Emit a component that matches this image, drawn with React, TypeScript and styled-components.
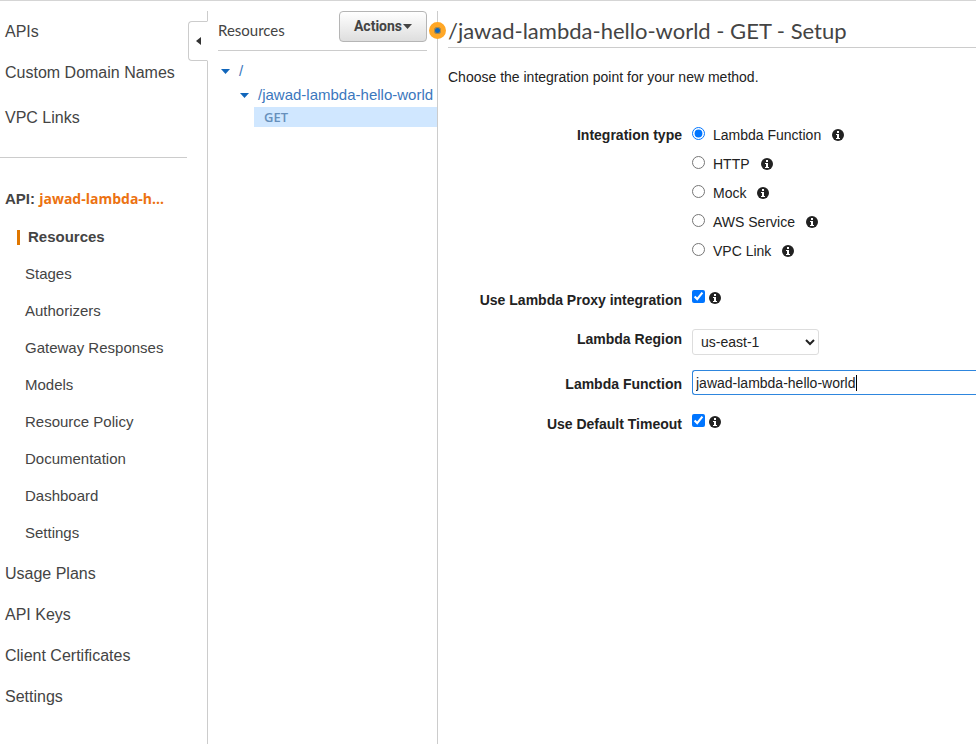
import React, { useState } from "react";
import styled, { createGlobalStyle, css } from "styled-components";

const GlobalStyle = createGlobalStyle`
  *, *::before, *::after { box-sizing: border-box; }
  body { margin: 0; background: #fff; color: #222; font: 14px/20px "Liberation Sans", Arial, sans-serif; }
  ul { list-style: none; margin: 0; padding: 0; }
  a { color: inherit; text-decoration: none; }
`;

const Page = styled.div`
  display: flex;
  min-height: 100vh;
  border-top: 1px solid #d5d5d5;
  padding-top: 10px;
`;

const Sidebar = styled.nav`
  position: relative;
  flex: none;
  width: 208px;
  border-right: 1px solid #ccc;
  color: #444;
`;

const MainLinks = styled.ul<{ $top?: boolean }>`
  display: grid;
  gap: 21px;
  padding: 21px 0 0 5px;
  font-size: 16px;
  ${(p) =>
    p.$top &&
    css`
      margin-right: 20px;
      padding-top: 11px;
      padding-bottom: 29px;
      border-bottom: 1px solid #ccc;
      li:last-child { padding-top: 4px; }
    `}
`;

const ApiName = styled.h2`
  margin: 31px 0 18px 5px;
  font-size: 15px;
  line-height: 20px;
  a {
    color: #ec7211;
    font-family: "Open Sans", sans-serif;
    font-size: 14px;
  }
`;

const SubLinks = styled.ul`
  display: grid;
  gap: 17px;
  font-size: 15px;
`;

const SubLink = styled.li<{ $active?: boolean }>`
  padding-left: 25px;
  ${(p) =>
    p.$active &&
    css`
      display: flex;
      align-items: center;
      gap: 8px;
      padding-left: 17px;
      font-weight: bold;
      &::before {
        content: "";
        width: 3px;
        height: 15px;
        background: #e07700;
      }
    `}
`;

const CollapseButton = styled.button`
  position: absolute;
  top: 10px;
  right: -1px;
  width: 20px;
  height: 40px;
  display: flex;
  align-items: center;
  justify-content: center;
  padding: 0;
  border: 1px solid #ccc;
  border-right-color: #fff;
  border-radius: 4px 0 0 4px;
  background: #fff;
`;

const TreePanel = styled.section`
  position: relative;
  flex: none;
  width: 230px;
  padding-left: 10px;
  border-right: 1px solid #ccc;
  color: #444;
`;

const TreeHeader = styled.header`
  display: flex;
  justify-content: space-between;
  align-items: flex-start;
  height: 40px;
  margin-right: 10px;
  border-bottom: 1px solid #ccc;
  h2 {
    margin: 9px 0 0;
    font: 15px/20px Lato, sans-serif;
  }
`;

const ActionsButton = styled.button`
  display: flex;
  align-items: center;
  justify-content: center;
  gap: 1px;
  width: 88px;
  height: 31px;
  padding: 0 0 1px;
  border: 1px solid #b5b5b5;
  border-radius: 4px;
  background: linear-gradient(#fff, #dedede);
  color: #444;
  font: bold 14px Roboto, sans-serif;
`;

const Tree = styled.ul`
  padding-top: 8px;
  color: #3b77bd;
  font-size: 15px;
  line-height: 24px;
`;

const TreeRow = styled.li<{ $depth: number }>`
  display: flex;
  align-items: center;
  gap: 9px;
  padding-left: ${(p) => 3 + p.$depth * 19}px;
  white-space: nowrap;
`;

const MethodRow = styled.li`
  margin-left: 36px;
  padding-left: 10px;
  background: #d0e7ff;
  color: #668fbb;
  font: 600 13px/20px "Open Sans", sans-serif;
`;

const ResizeHandle = styled.span`
  position: absolute;
  top: 11px;
  right: -9px;
  width: 17px;
  height: 17px;
  border: 5px solid #ffa726;
  border-radius: 50%;
  background: #1166bb;
  box-shadow: inset 0 0 0 1px #b98a3a;
`;

const Main = styled.main`
  flex: 1;
  min-width: 0;
  padding-left: 10px;
`;

const Title = styled.h1`
  margin: 0;
  padding: 6px 0 2px;
  border-bottom: 1px solid #ccc;
  color: #444;
  font: 22px/28px Lato, sans-serif;
`;

const Intro = styled.p`
  margin: 19px 0 38px;
`;

const Form = styled.form`
  display: grid;
  grid-template-columns: 234px 1fr;
  gap: 15px 10px;
`;

const FieldLabel = styled.label<{ $boxed?: boolean }>`
  text-align: right;
  font-weight: bold;
  ${(p) => p.$boxed && css`padding: 4px 0 5px;`}
`;

const RadioList = styled.div`
  display: grid;
  gap: 9px;
  margin-bottom: 14px;
`;

const Option = styled.div`
  display: flex;
  align-items: center;
  height: 20px;
  label { margin: 0 11px 0 8px; }
`;

const Choice = styled.input`
  width: 13px;
  height: 13px;
  margin: 0 0 3px;
  accent-color: #0075ff;
`;

const CheckLine = styled.div`
  display: flex;
  align-items: center;
  align-self: start;
  gap: 4px;
  height: 16px;
  margin-bottom: 8px;
`;

const RegionSelect = styled.select`
  width: 127px;
  height: 26px;
  padding: 0 4px;
  border: 1px solid #ddd;
  border-radius: 3px;
  background: #fff;
  color: #222;
  font: inherit;
`;

const InputWrap = styled.div`
  position: relative;
  height: 25px;
`;

const FunctionInput = styled.input`
  display: block;
  width: 100%;
  height: 25px;
  padding: 0 3px;
  border: 1px solid #2e86de;
  border-right: 0;
  border-radius: 3px 0 0 3px;
  outline: none;
  color: #222;
  font: inherit;
`;

const TextCursor = styled.span`
  position: absolute;
  top: 5px;
  left: 164px;
  width: 1px;
  height: 16px;
  background: #000;
`;

const Caret = ({ color = "#1166bb" }) => (
  <svg width="9" height="5" viewBox="0 0 9 5" aria-hidden="true">
    <path d="M0 0h9L4.500 5z" fill={color} />
  </svg>
);

const Info = () => (
  <svg width="12" height="12" viewBox="0 0 12 12" role="img" aria-label="Info">
    <circle cx="6" cy="6" r="6" fill="#222" />
    <path d="M5 2h2v2H5zM4 5h3v4h1v1H4V9h1V6H4z" fill="#fff" />
  </svg>
);

const types = ["Lambda Function", "HTTP", "Mock", "AWS Service", "VPC Link"];
const subLinks = ["Resources", "Stages", "Authorizers", "Gateway Responses", "Models", "Resource Policy", "Documentation", "Dashboard", "Settings"];

export default function App() {
  const [type, setType] = useState(types[0]);
  const [fn, setFn] = useState("jawad-lambda-hello-world");
  const [touched, setTouched] = useState(false);
  return (
    <>
      <GlobalStyle />
      <Page>
        <Sidebar>
          <MainLinks $top>
            {["APIs", "Custom Domain Names", "VPC Links"].map((t) => (
              <li key={t}><a href="#">{t}</a></li>
            ))}
          </MainLinks>
          <ApiName>API: <a href="#">jawad-lambda-h...</a></ApiName>
          <SubLinks>
            {subLinks.map((t, i) => (
              <SubLink key={t} $active={i === 0}><a href="#">{t}</a></SubLink>
            ))}
          </SubLinks>
          <MainLinks>
            {["Usage Plans", "API Keys", "Client Certificates", "Settings"].map((t) => (
              <li key={t}><a href="#">{t}</a></li>
            ))}
          </MainLinks>
          <CollapseButton aria-label="Collapse navigation">
            <svg width="5" height="8" viewBox="0 0 5 8" aria-hidden="true"><path d="M5 0v8L0 4z" fill="#333" /></svg>
          </CollapseButton>
        </Sidebar>
        <TreePanel>
          <TreeHeader>
            <h2>Resources</h2>
            <ActionsButton>Actions<Caret color="#444" /></ActionsButton>
          </TreeHeader>
          <Tree>
            <TreeRow $depth={0}><Caret /><a href="#">/</a></TreeRow>
            <TreeRow $depth={1}><Caret /><a href="#">/jawad-lambda-hello-world</a></TreeRow>
            <MethodRow><a href="#">GET</a></MethodRow>
          </Tree>
          <ResizeHandle />
        </TreePanel>
        <Main>
          <Title>/jawad-lambda-hello-world - GET - Setup</Title>
          <Intro>Choose the integration point for your new method.</Intro>
          <Form>
            <FieldLabel as="span" id="type-label">Integration type</FieldLabel>
            <RadioList role="radiogroup" aria-labelledby="type-label">
              {types.map((t) => (
                <Option key={t}>
                  <Choice type="radio" name="type" id={t} checked={type === t} onChange={() => setType(t)} />
                  <label htmlFor={t}>{t}</label>
                  <Info />
                </Option>
              ))}
            </RadioList>
            <FieldLabel htmlFor="proxy">Use Lambda Proxy integration</FieldLabel>
            <CheckLine><Choice id="proxy" type="checkbox" defaultChecked /><Info /></CheckLine>
            <FieldLabel htmlFor="region">Lambda Region</FieldLabel>
            <RegionSelect id="region"><option>us-east-1</option></RegionSelect>
            <FieldLabel $boxed htmlFor="function">Lambda Function</FieldLabel>
            <InputWrap>
              <FunctionInput
                id="function"
                value={fn}
                onChange={(e) => setFn(e.target.value)}
                onFocus={() => setTouched(true)}
              />
              {!touched && <TextCursor />}
            </InputWrap>
            <FieldLabel htmlFor="timeout">Use Default Timeout</FieldLabel>
            <CheckLine><Choice id="timeout" type="checkbox" defaultChecked /><Info /></CheckLine>
          </Form>
        </Main>
      </Page>
    </>
  );
}
